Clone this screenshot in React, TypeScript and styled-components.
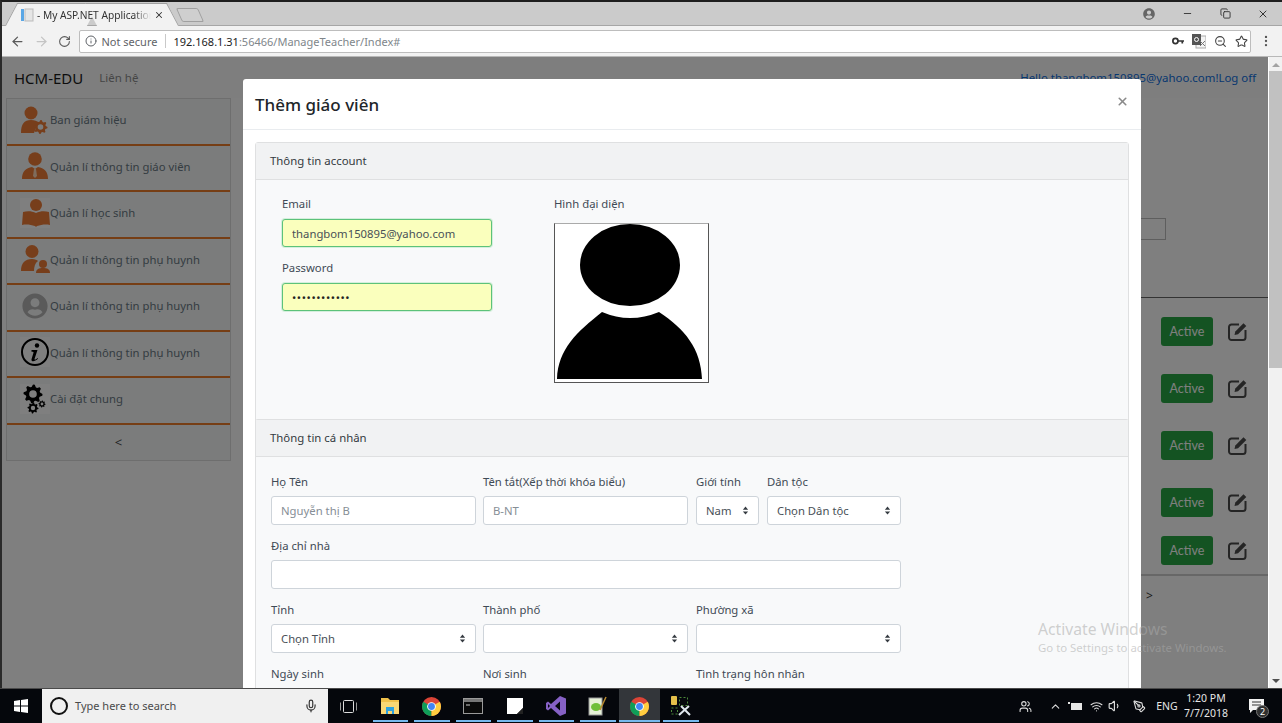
// App.tsx
import React from "react";
import styled, { createGlobalStyle } from "styled-components";
import {
  ArrowLeft,
  ArrowRight,
  RotateCw,
  Info,
  ZoomOut,
  Star,
  MoreVertical,
  Minus,
  Copy,
  X,
  Mic,
  ChevronUp,
  Volume1,
  Wifi,
  Users,
  PenTool,
} from "lucide-react";
import { FaUserCircle } from "react-icons/fa";

const UI_FONT = `"Noto Sans", "Open Sans", "Liberation Sans", sans-serif`;

const GlobalStyle = createGlobalStyle`
  html, body {
    margin: 0;
    padding: 0;
    height: 100%;
    overflow: hidden;
    background: #222;
  }
  * {
    box-sizing: border-box;
  }
  body {
    font-family: ${UI_FONT};
    font-size: 12px;
    color: #212529;
  }
`;

const Screen = styled.div`
  width: 1282px;
  height: 723px;
  display: flex;
  flex-direction: column;
  overflow: hidden;
  position: relative;
`;

const BrowserFrame = styled.div`
  flex: 1;
  min-height: 0;
  display: flex;
  flex-direction: column;
  border-left: 2px solid #2a2a2a;
  border-top: 2px solid #1e1e1e;
`;

/* ---------- tab strip ---------- */

const TabStrip = styled.div`
  height: 24px;
  background: #cbcbcb;
  border-bottom: 1px solid #a6a6a6;
  display: flex;
  align-items: flex-end;
  padding-left: 9px;
  flex-shrink: 0;
`;

const Tab = styled.div`
  position: relative;
  width: 162px;
  height: 23px;
  margin-bottom: -1px;
  display: flex;
  align-items: center;
  padding: 0 9px 0 9px;
  gap: 3px;
  z-index: 1;
  &::before,
  &::after {
    content: "";
    position: absolute;
    top: 0;
    bottom: 0;
    width: 50%;
    background: #f2f2f2;
    border-top: 1px solid #a0a0a0;
    z-index: -1;
  }
  &::before {
    left: 0;
    transform: skewX(-28deg);
    border-left: 1px solid #a0a0a0;
  }
  &::after {
    right: 0;
    transform: skewX(28deg);
    border-right: 1px solid #a0a0a0;
  }
`;

const TabTitle = styled.span`
  flex: 1;
  white-space: nowrap;
  overflow: hidden;
  font-size: 10.2px;
  color: #333;
  mask-image: linear-gradient(to right, #000 85%, transparent);
`;

const NewTab = styled.div`
  width: 22px;
  height: 14px;
  margin: 0 0 3px 6px;
  background: #cfcfcf;
  border: 1px solid #a0a0a0;
  border-radius: 2px;
  transform: skewX(24deg);
`;

const WindowControls = styled.div`
  margin-left: auto;
  align-self: center;
  display: flex;
  align-items: center;
  color: #333;
`;

const ControlSlot = styled.div<{ $w: number }>`
  width: ${(p) => p.$w}px;
  display: flex;
  justify-content: center;
`;

/* ---------- toolbar ---------- */

const Toolbar = styled.div`
  height: 31px;
  background: #f2f2f2;
  border-bottom: 1px solid #b8b8b8;
  display: flex;
  align-items: center;
  flex-shrink: 0;
  padding-left: 4px;
`;

const NavButton = styled.div<{ $off?: boolean }>`
  width: 23.5px;
  display: flex;
  justify-content: center;
  color: ${(p) => (p.$off ? "#c4c4c4" : "#5a5a5a")};
`;

const Omnibox = styled.div`
  margin-left: 2px;
  width: 1172px;
  height: 23px;
  background: #fff;
  border: 1px solid #bdbdbd;
  border-radius: 2px;
  display: flex;
  align-items: center;
  padding-left: 5px;
  font-size: 11px;
`;

const SecurityChip = styled.div`
  display: flex;
  align-items: center;
  gap: 5px;
  color: #5f6368;
  padding-right: 8px;
  border-right: 1px solid #c9c9c9;
  height: 14px;
  margin-right: 7px;
`;

const UrlHost = styled.span`
  color: #222;
`;

const UrlPath = styled.span`
  color: #80868b;
`;

const OmniActions = styled.div`
  margin-left: auto;
  display: flex;
  align-items: center;
  gap: 8px;
  padding-right: 2px;
  color: #444;
`;

const MenuSlot = styled.div`
  width: 30px;
  display: flex;
  justify-content: center;
  color: #555;
`;

/* ---------- page behind the dialog ---------- */

const Viewport = styled.div`
  flex: 1;
  min-height: 0;
  display: flex;
`;

const PageArea = styled.div`
  flex: 1;
  position: relative;
  overflow: hidden;
  background: #fff;
`;

const Navbar = styled.div`
  height: 41px;
  background: #fcfdfd;
  display: flex;
  align-items: center;
  padding: 0 12px;
`;

const Brand = styled.span`
  font-size: 15px;
  color: #1a1a1a;
  margin-right: 16px;
`;

const NavLink = styled.span`
  font-size: 11.5px;
  color: #8c8c8c;
`;

const UserLinks = styled.span`
  margin-left: auto;
  font-size: 11.4px;
  color: #0f6fe0;
`;

const PageBody = styled.div`
  display: flex;
  align-items: flex-start;
`;

const Sidebar = styled.div`
  width: 225px;
  margin-left: 4px;
  background: #f6f8f8;
  border: 1px solid #dcdcdc;
`;

const SideRow = styled.div`
  height: 46.5px;
  display: flex;
  align-items: center;
  padding: 0 0 3px 13px;
  border-bottom: 2px solid #ec7c2a;
  font-size: 11.3px;
  color: #6b7884;
`;

const SideIcon = styled.div<{ $boxed?: boolean }>`
  width: 30px;
  height: 30px;
  flex-shrink: 0;
  display: flex;
  align-items: center;
  justify-content: center;
  background: ${(p) => (p.$boxed ? "#fff" : "transparent")};
`;

const CollapseRow = styled.div`
  height: 35px;
  display: flex;
  align-items: center;
  justify-content: center;
  font-size: 13px;
  color: #4c4c4c;
`;

const MainColumn = styled.div`
  flex: 1;
  padding-top: 120px;
`;

const SearchLine = styled.div`
  display: flex;
  justify-content: flex-end;
  padding-right: 102px;
`;

const SearchBox = styled.div`
  width: 100px;
  height: 22px;
  border: 1px solid #bdbdbd;
`;

const TableTop = styled.div`
  margin: 57px 0 0 60px;
  border-top: 1px solid #666;
  padding-top: 19px;
`;

const TableRow = styled.div<{ $h: number }>`
  height: ${(p) => p.$h}px;
  display: flex;
  justify-content: flex-end;
  gap: 15px;
  padding-right: 21px;
`;

const ActiveButton = styled.div`
  width: 52px;
  height: 29px;
  background: #28a745;
  border-radius: 3px;
  color: #fff;
  font-family: Lato, ${UI_FONT};
  font-size: 12.5px;
  display: flex;
  align-items: center;
  justify-content: center;
`;

const EditSlot = styled.div`
  width: 19px;
  height: 29px;
  display: flex;
  align-items: center;
  color: #4a4a4a;
`;

const Pager = styled.div`
  margin-left: 60px;
  border-top: 2px solid #cfcfcf;
  padding: 11px 0 0 855px;
  font-size: 12px;
  color: #333;
`;

const Backdrop = styled.div`
  position: absolute;
  inset: 0;
  background: rgba(0, 0, 0, 0.5);
`;

/* ---------- dialog ---------- */

const Dialog = styled.div`
  position: absolute;
  top: 22px;
  left: 241px;
  width: 898px;
  height: 700px;
  background: #fff;
  border-radius: 3px 3px 0 0;
`;

const DialogHeader = styled.div`
  height: 51px;
  display: flex;
  align-items: center;
  justify-content: space-between;
  padding: 0 12px;
  border-bottom: 1px solid #e9ecef;
`;

const DialogTitle = styled.h5`
  margin: 0;
  font-size: 17px;
  font-weight: 500;
  color: #212529;
`;

const CloseSlot = styled.div`
  display: flex;
  margin-bottom: 6px;
  color: #8a8a8a;
`;

const DialogBody = styled.div`
  padding: 12px;
`;

const Card = styled.div`
  border: 1px solid #dfe0e1;
  border-radius: 3px;
  background: #f8f9fa;
`;

const CardHeader = styled.div`
  height: 37px;
  display: flex;
  align-items: center;
  padding: 0 0 2px 14px;
  background: #f1f2f3;
  border-bottom: 1px solid #dfe0e1;
  font-size: 11.4px;
  color: #343a40;
`;

const AccountBody = styled.div`
  height: 239px;
  padding: 13px 0 0 26px;
  display: flex;
  gap: 62px;
`;

const Label = styled.label`
  height: 20px;
  margin-bottom: 5px;
  display: flex;
  align-items: center;
  font-size: 11.3px;
  color: #3f4a55;
  white-space: nowrap;
`;

const Field = styled.div<{ $span?: number }>`
  grid-column: span ${(p) => p.$span ?? 1};
  max-width: ${(p) => (p.$span ? "none" : "205px")};
  height: 64px;
  display: flex;
  flex-direction: column;
  min-width: 0;
`;

const AccountFields = styled.div`
  width: 210px;
  display: flex;
  flex-direction: column;
  ${Label} {
    margin-bottom: 6px;
  }
  ${Field} {
    max-width: none;
  }
`;

const InnerCard = styled(Card)`
  margin: 0 -1px;
  border-bottom: none;
`;

const PersonBody = styled.div`
  height: 260px;
  padding: 14px 0 0 15px;
`;

const FormGrid = styled.div`
  width: 630px;
  display: grid;
  grid-template-columns: 212px 213px 205px;
`;

const PairCell = styled.div`
  display: grid;
  grid-template-columns: 63px 134px;
  column-gap: 8px;
`;

const TextInput = styled.input<{ $filled?: boolean }>`
  width: 100%;
  height: ${(p) => (p.$filled ? 28 : 29)}px;
  padding: 0 9px;
  font: inherit;
  font-size: 11.3px;
  color: #495057;
  outline: none;
  border-radius: 3px;
  background: ${(p) => (p.$filled ? "#faffbd" : "#fff")};
  border: 1px solid ${(p) => (p.$filled ? "#5cc27a" : "#ced4da")};
  box-shadow: ${(p) => (p.$filled ? "0 0 0 1px #d5efdc" : "none")};
  &::placeholder {
    color: #868e96;
  }
  &[type="password"] {
    letter-spacing: 0.6px;
    color: #222;
  }
`;

const SelectBox = styled.div`
  height: 29px;
  padding: 0 9px;
  display: flex;
  align-items: center;
  justify-content: space-between;
  background: #fff;
  border: 1px solid #ced4da;
  border-radius: 3px;
  font-size: 11.3px;
  color: #495057;
`;

const Avatar = styled.div`
  width: 155px;
  height: 160px;
  margin-top: 5px;
  background: #fff;
  border: 1px solid #555;
  border-top-color: #aaa;
  svg {
    display: block;
  }
`;

const AvatarColumn = styled.div`
  display: flex;
  flex-direction: column;
`;

/* ---------- right scrollbar ---------- */

const Scrollbar = styled.div`
  width: 14px;
  background: #f1f1f1;
  display: flex;
  flex-direction: column;
  align-items: center;
  border-left: 1px solid #fff;
`;

const ScrollArrow = styled.div<{ $down?: boolean }>`
  width: 0;
  height: 0;
  border-left: 4px solid transparent;
  border-right: 4px solid transparent;
  ${(p) =>
    p.$down
      ? "border-top: 4px solid #505050; margin-top: auto; margin-bottom: 5px;"
      : "border-bottom: 4px solid #a3a3a3; margin-top: 6px;"}
`;

const ScrollThumb = styled.div`
  width: 100%;
  height: 297px;
  margin-top: 4px;
  background: #c1c1c1;
`;

/* ---------- activation watermark ---------- */

const Watermark = styled.div`
  position: absolute;
  left: 1038px;
  top: 619px;
  color: rgba(169, 169, 169, 0.54);
  pointer-events: none;
  z-index: 5;
`;

const WatermarkTitle = styled.div`
  font-size: 15.7px;
  line-height: 20px;
`;

const WatermarkHint = styled.div`
  font-size: 11.4px;
  line-height: 18px;
`;

/* ---------- taskbar ---------- */

const Taskbar = styled.div`
  height: 35px;
  flex-shrink: 0;
  background: #05070c;
  border-top: 1px solid #4a4a4a;
  display: flex;
  align-items: stretch;
  color: #e6e6e6;
`;

const StartButton = styled.div`
  width: 42px;
  display: flex;
  align-items: center;
  justify-content: center;
`;

const SearchField = styled.div`
  width: 286px;
  background: #f0f0f0;
  display: flex;
  align-items: center;
  padding: 0 10px 1px 7px;
  font-size: 11px;
  color: #4a4a4a;
`;

const CortanaRing = styled.div`
  width: 18px;
  height: 18px;
  border-radius: 50%;
  border: 2px solid #111;
  margin: 0 7px 0 1px;
`;

const MicSlot = styled.div`
  margin-left: auto;
  display: flex;
  color: #333;
`;

const TaskItem = styled.div<{ $on?: boolean; $active?: boolean }>`
  width: 41.5px;
  position: relative;
  display: flex;
  align-items: center;
  justify-content: center;
  background: ${(p) => (p.$active ? "#33363a" : "transparent")};
  &::after {
    content: "";
    display: ${(p) => (p.$on ? "block" : "none")};
    position: absolute;
    bottom: 1px;
    left: ${(p) => (p.$active ? 0 : 3)}px;
    right: ${(p) => (p.$active ? 0 : 3)}px;
    height: 2px;
    background: #76b9ed;
  }
`;

const Tray = styled.div`
  margin-left: auto;
  display: flex;
  align-items: center;
  padding-right: 11px;
`;

const TraySlot = styled.div<{ $w: number }>`
  width: ${(p) => p.$w}px;
  display: flex;
  justify-content: center;
  color: #dcdcdc;
`;

const TrayLang = styled.div`
  width: 28px;
  text-align: center;
  font-size: 10.5px;
`;

const Clock = styled.div`
  width: 50px;
  text-align: center;
  font-size: 10.5px;
  line-height: 15px;
  white-space: nowrap;
`;

const NotifySlot = styled.div`
  position: relative;
  width: 30px;
  margin-left: 10px;
  display: flex;
  justify-content: center;
`;

const NotifyBadge = styled.span`
  position: absolute;
  right: 2px;
  top: 6px;
  width: 13px;
  height: 13px;
  border-radius: 50%;
  background: #2f2f2f;
  border: 1px solid #777;
  color: #fff;
  font-size: 9px;
  line-height: 11px;
  text-align: center;
`;

/* ---------- drawings ---------- */

const gearPath = (cx: number, cy: number, r: number, teeth: number) => {
  const pts: string[] = [];
  const steps = teeth * 4;
  for (let i = 0; i < steps; i++) {
    const a = (i / steps) * Math.PI * 2;
    const rad = i % 4 < 2 ? r : r * 0.76;
    pts.push(`${(cx + Math.cos(a) * rad).toFixed(2)} ${(cy + Math.sin(a) * rad).toFixed(2)}`);
  }
  const h = r * 0.4;
  return `M${pts.join("L")}Z M${cx - h} ${cy}a${h} ${h} 0 1 0 ${h * 2} 0a${h} ${h} 0 1 0 ${-h * 2} 0Z`;
};

const BROWN = "#ee7c36";

const AdminIcon = () => (
  <svg width="30" height="30" viewBox="0 0 30 30">
    <circle cx="11" cy="8" r="6.5" fill={BROWN} />
    <path d="M1 28c0-9 3-13 10-13 4 0 6 1 7 3l-4 10z" fill={BROWN} />
    <path d={gearPath(20.5, 22, 7, 8)} fill={BROWN} fillRule="evenodd" />
  </svg>
);

const TeacherIcon = () => (
  <svg width="30" height="30" viewBox="0 0 30 30">
    <circle cx="15" cy="8" r="6.8" fill={BROWN} />
    <path d="M2 28c0-8 4-11 10-12l3 2 3-2c6 1 10 4 10 12z" fill={BROWN} />
    <path d="M14 18h2l1 7-2 2-2-2z" fill="#ffd9b8" />
  </svg>
);

const StudentIcon = () => (
  <svg width="30" height="30" viewBox="0 0 30 30">
    <circle cx="16" cy="7" r="6" fill={BROWN} />
    <path d="M3 14c4-1 9-1 13 1 4-2 9-2 13-1l1 13c-5-1-9 0-13 1l-1 1-1-1c-4-1-8-2-13-1z" fill={BROWN} />
  </svg>
);

const ParentIcon = () => (
  <svg width="30" height="30" viewBox="0 0 30 30">
    <circle cx="12" cy="7.5" r="6.5" fill={BROWN} />
    <path d="M1 27c0-8 4-12 11-12 3 0 5 1 6 2-3 2-4 6-4 10z" fill={BROWN} />
    <circle cx="23" cy="20" r="4" fill={BROWN} />
    <path d="M16 29c0-4 3-5 7-5s7 1 7 5z" fill={BROWN} />
  </svg>
);

const InfoRingIcon = () => (
  <svg width="30" height="30" viewBox="0 0 30 30">
    <circle cx="15" cy="15" r="13" fill="none" stroke="#000" strokeWidth="2" />
    <circle cx="17" cy="8.5" r="2.2" fill="#000" />
    <path d="M11.5 13h6l-3 9c0 1 1 1 3-1l.5.8c-3 3-7 3.5-6.5.5l2-6.5c.2-1-.6-1.2-2-1z" fill="#000" />
  </svg>
);

const GearsIcon = () => (
  <svg width="30" height="30" viewBox="0 0 30 30">
    <path d={gearPath(13, 10, 9.5, 8)} fill="#000" fillRule="evenodd" />
    <path d={gearPath(13, 24, 5.5, 8)} fill="#000" fillRule="evenodd" />
    <path d={gearPath(22, 20, 3.5, 8)} fill="#000" fillRule="evenodd" />
  </svg>
);

const EditIcon = () => (
  <svg width="19" height="19" viewBox="0 0 19 19">
    <path
      d="M11 2.5H3.5A2.5 2.5 0 0 0 1 5v10.5A2.5 2.5 0 0 0 3.5 18H15a2.5 2.5 0 0 0 2.5-2.5V8"
      fill="none"
      stroke="currentColor"
      strokeWidth="2"
    />
    <path d="M6.5 13l.8-3.6L15.5 1.2l2.8 2.8-8.2 8.2z" fill="currentColor" />
  </svg>
);

const SelectArrows = () => (
  <svg width="7" height="9" viewBox="0 0 8 10">
    <path d="M4 0.5 7 4H1zM4 9.5 1 6h6z" fill="#343a40" />
  </svg>
);

const AvatarPicture = () => (
  <svg width="153" height="158" viewBox="0 0 153 158">
    <ellipse cx="75" cy="41" rx="50" ry="41" fill="#000" />
    <path d="M2 155C3 125 22 108 47 88Q75 100 104 88C130 105 146 125 147 155Z" fill="#000" />
  </svg>
);

const PageGlyph = () => (
  <svg width="14" height="14" viewBox="0 0 14 14">
    <rect x="1" y="1" width="3" height="12" fill="#5aa7e6" />
    <rect x="5" y="1" width="8" height="12" fill="#e6e6e6" stroke="#bbb" />
  </svg>
);

const KeyGlyph = () => (
  <svg width="12" height="12" viewBox="0 0 14 14">
    <circle cx="4" cy="7" r="3" fill="none" stroke="#333" strokeWidth="2" />
    <path d="M7 6h7v2h-1v2h-2V8H7z" fill="#333" />
  </svg>
);

const TranslateGlyph = () => (
  <svg width="14" height="15" viewBox="0 0 14 15">
    <rect x="4" y="2" width="10" height="12" fill="#f4f4f4" stroke="#aaa" />
    <rect x="0" y="0" width="9" height="11" fill="#555" />
    <circle cx="4.5" cy="5.5" r="2" fill="none" stroke="#fff" />
    <path d="M8 7l5 5M13 7l-5 5" stroke="#777" />
  </svg>
);

const WindowsLogo = () => (
  <svg width="14" height="14" viewBox="0 0 14 14">
    <path d="M0 2l6-1v5.6H0zM7 .9 14 0v6.6H7zM0 7.4h6V13l-6-1zM7 7.4h7V14l-7-1z" fill="#fff" />
  </svg>
);

const TaskViewIcon = () => (
  <svg width="17" height="13" viewBox="0 0 17 13">
    <rect x="3.5" y=".5" width="10" height="12" rx="1" fill="none" stroke="#ddd" />
    <path d="M.5 2.5v8M16.5 2.5v8" stroke="#999" />
  </svg>
);

const ChromeIcon = () => (
  <svg width="19" height="19" viewBox="0 0 20 20">
    <circle cx="10" cy="10" r="10" fill="#db4437" />
    <path d="M10 10 1.34 5A10 10 0 0 0 10 20z" fill="#0f9d58" />
    <path d="M10 10V20A10 10 0 0 0 18.66 5z" fill="#ffcd40" />
    <circle cx="10" cy="10" r="4.6" fill="#fff" />
    <circle cx="10" cy="10" r="3.6" fill="#4285f4" />
  </svg>
);

const FolderIcon = () => (
  <svg width="20" height="18" viewBox="0 0 20 18">
    <path d="M1 1h7l2 2h9v3H1z" fill="#f0c14b" />
    <path d="M1 5h18v12H1z" fill="#f8d775" />
    <path d="M6 10h8v7h-2v-3H8v3H6z" fill="#2ba1e0" />
  </svg>
);

const ConsoleIcon = () => (
  <svg width="20" height="16" viewBox="0 0 20 16">
    <rect x=".5" y=".5" width="19" height="15" fill="#0a0a0a" stroke="#9a9a9a" />
    <rect x="1" y="1" width="18" height="3" fill="#777" />
    <path d="M3 7h4" stroke="#ccc" />
  </svg>
);

const StickyIcon = () => (
  <svg width="16" height="16" viewBox="0 0 16 16">
    <path d="M0 0h16v10l-6 6H0z" fill="#fff" />
    <path d="M16 10v6h-6z" fill="#222" />
  </svg>
);

const StudioIcon = () => (
  <svg width="20" height="20" viewBox="0 0 20 20">
    <path d="M14 0l6 2.5v15L14 20 5 12l-3 2.5L0 13V7l2-1.5L5 8zM14 5.5 9 10l5 4.5zM2 8v4l2-2z" fill="#8661c5" />
  </svg>
);

const NotepadIcon = () => (
  <svg width="20" height="20" viewBox="0 0 20 20">
    <rect x="1" y="2" width="13" height="17" fill="#e6f1d8" stroke="#999" />
    <ellipse cx="8" cy="11" rx="5" ry="4" fill="#6fbf3a" />
    <path d="M12 14 18 1" stroke="#b98a2e" strokeWidth="1.5" />
  </svg>
);

const ToolboxIcon = () => (
  <svg width="22" height="22" viewBox="0 0 22 22">
    <rect x="1" y="1" width="6" height="9" rx="1" fill="#e5c04a" />
    <rect x="9.5" y="2.5" width="8" height="8" fill="none" stroke="#4d8a3a" strokeDasharray="2 2" />
    <rect x="1.5" y="13" width="6" height="6" fill="none" stroke="#4d8a3a" strokeDasharray="2 2" />
    <path d="M9 20l10-9M11 11l9 9" stroke="#dfe6ee" strokeWidth="2" />
  </svg>
);

const BatteryGlyph = () => (
  <svg width="14" height="10" viewBox="0 0 14 10">
    <path d="M0 1h2v2H0zM3 2h11v7H3z" fill="#e6e6e6" />
  </svg>
);

const NoteGlyph = () => (
  <svg width="15" height="14" viewBox="0 0 15 14">
    <path d="M0 0h15v11H4l-3 3v-3H0z" fill="#f2f2f2" />
    <path d="M3 3h9M3 6h9" stroke="#333" />
  </svg>
);

/* ---------- data ---------- */

const sideItems = [
  { label: "Ban giám hiệu", icon: <AdminIcon /> },
  { label: "Quản lí thông tin giáo viên", icon: <TeacherIcon /> },
  { label: "Quản lí học sinh", icon: <StudentIcon />, boxed: true },
  { label: "Quản lí thông tin phụ huynh", icon: <ParentIcon /> },
  { label: "Quản lí thông tin phụ huynh", icon: <FaUserCircle size={26} color="#b4b4b4" /> },
  { label: "Quản lí thông tin phụ huynh", icon: <InfoRingIcon />, boxed: true },
  { label: "Cài đặt chung", icon: <GearsIcon />, boxed: true },
];

const rowHeights = [57, 57, 57, 48, 38];

const taskIcons = [
  { icon: <TaskViewIcon />, on: false },
  { icon: <FolderIcon />, on: true },
  { icon: <ChromeIcon />, on: true },
  { icon: <ConsoleIcon />, on: true },
  { icon: <StickyIcon />, on: true },
  { icon: <StudioIcon />, on: true },
  { icon: <NotepadIcon />, on: true },
  { icon: <ChromeIcon />, on: true, active: true },
  { icon: <ToolboxIcon />, on: true },
];

const App: React.FC = () => {
  return (
    <Screen>
      <GlobalStyle />
      <BrowserFrame>
        <TabStrip>
          <Tab>
            <PageGlyph />
            <TabTitle>- My ASP.NET Application</TabTitle>
            <X size={10} strokeWidth={2.5} color="#333" />
          </Tab>
          <NewTab />
          <WindowControls>
            <ControlSlot $w={38}>
              <FaUserCircle size={12} color="#666" />
            </ControlSlot>
            <ControlSlot $w={38}>
              <Minus size={11} />
            </ControlSlot>
            <ControlSlot $w={38}>
              <Copy size={11} />
            </ControlSlot>
            <ControlSlot $w={38}>
              <X size={12} />
            </ControlSlot>
          </WindowControls>
        </TabStrip>

        <Toolbar>
          <NavButton>
            <ArrowLeft size={15} />
          </NavButton>
          <NavButton $off>
            <ArrowRight size={15} />
          </NavButton>
          <NavButton>
            <RotateCw size={13} />
          </NavButton>
          <Omnibox>
            <SecurityChip>
              <Info size={12} />
              Not secure
            </SecurityChip>
            <UrlHost>192.168.1.31</UrlHost>
            <UrlPath>:56466/ManageTeacher/Index#</UrlPath>
            <OmniActions>
              <KeyGlyph />
              <TranslateGlyph />
              <ZoomOut size={13} />
              <Star size={13} />
            </OmniActions>
          </Omnibox>
          <MenuSlot>
            <MoreVertical size={14} />
          </MenuSlot>
        </Toolbar>

        <Viewport>
          <PageArea>
            <Navbar>
              <Brand>HCM-EDU</Brand>
              <NavLink>Liên hệ</NavLink>
              <UserLinks>Hello thangbom150895@yahoo.com!Log off</UserLinks>
            </Navbar>
            <PageBody>
              <Sidebar>
                {sideItems.map((item, i) => (
                  <SideRow key={i}>
                    <SideIcon $boxed={item.boxed}>{item.icon}</SideIcon>
                    {item.label}
                  </SideRow>
                ))}
                <CollapseRow>&lt;</CollapseRow>
              </Sidebar>
              <MainColumn>
                <SearchLine>
                  <SearchBox />
                </SearchLine>
                <TableTop>
                  {rowHeights.map((h, i) => (
                    <TableRow key={i} $h={h}>
                      <ActiveButton>Active</ActiveButton>
                      <EditSlot>
                        <EditIcon />
                      </EditSlot>
                    </TableRow>
                  ))}
                </TableTop>
                <Pager>&gt;</Pager>
              </MainColumn>
            </PageBody>
            <Backdrop />

            <Dialog>
              <DialogHeader>
                <DialogTitle>Thêm giáo viên</DialogTitle>
                <CloseSlot>
                  <X size={13} strokeWidth={3} />
                </CloseSlot>
              </DialogHeader>
              <DialogBody>
                <Card>
                  <CardHeader>Thông tin account</CardHeader>
                  <AccountBody>
                    <AccountFields>
                      <Field>
                        <Label>Email</Label>
                        <TextInput $filled readOnly defaultValue="thangbom150895@yahoo.com" />
                      </Field>
                      <Field>
                        <Label>Password</Label>
                        <TextInput $filled readOnly type="password" defaultValue="123456789012" />
                      </Field>
                    </AccountFields>
                    <AvatarColumn>
                      <Label>Hình đại diện</Label>
                      <Avatar>
                        <AvatarPicture />
                      </Avatar>
                    </AvatarColumn>
                  </AccountBody>
                  <InnerCard>
                    <CardHeader>Thông tin cá nhân</CardHeader>
                    <PersonBody>
                      <FormGrid>
                        <Field>
                          <Label>Họ Tên</Label>
                          <TextInput readOnly placeholder="Nguyễn thị B" />
                        </Field>
                        <Field>
                          <Label>Tên tắt(Xếp thời khóa biểu)</Label>
                          <TextInput readOnly placeholder="B-NT" />
                        </Field>
                        <PairCell>
                          <Field>
                            <Label>Giới tính</Label>
                            <SelectBox>
                              Nam
                              <SelectArrows />
                            </SelectBox>
                          </Field>
                          <Field>
                            <Label>Dân tộc</Label>
                            <SelectBox>
                              Chọn Dân tộc
                              <SelectArrows />
                            </SelectBox>
                          </Field>
                        </PairCell>
                        <Field $span={3}>
                          <Label>Địa chỉ nhà</Label>
                          <TextInput readOnly />
                        </Field>
                        <Field>
                          <Label>Tỉnh</Label>
                          <SelectBox>
                            Chọn Tỉnh
                            <SelectArrows />
                          </SelectBox>
                        </Field>
                        <Field>
                          <Label>Thành phố</Label>
                          <SelectBox>
                            <span />
                            <SelectArrows />
                          </SelectBox>
                        </Field>
                        <Field>
                          <Label>Phường xã</Label>
                          <SelectBox>
                            <span />
                            <SelectArrows />
                          </SelectBox>
                        </Field>
                        <Field>
                          <Label>Ngày sinh</Label>
                        </Field>
                        <Field>
                          <Label>Nơi sinh</Label>
                        </Field>
                        <Field>
                          <Label>Tình trạng hôn nhân</Label>
                        </Field>
                      </FormGrid>
                    </PersonBody>
                  </InnerCard>
                </Card>
              </DialogBody>
            </Dialog>
          </PageArea>
          <Scrollbar>
            <ScrollArrow />
            <ScrollThumb />
            <ScrollArrow $down />
          </Scrollbar>
        </Viewport>
      </BrowserFrame>

      <Taskbar>
        <StartButton>
          <WindowsLogo />
        </StartButton>
        <SearchField>
          <CortanaRing />
          Type here to search
          <MicSlot>
            <Mic size={14} />
          </MicSlot>
        </SearchField>
        {taskIcons.map((t, i) => (
          <TaskItem key={i} $on={t.on} $active={t.active}>
            {t.icon}
          </TaskItem>
        ))}
        <Tray>
          <TraySlot $w={44}>
            <Users size={13} />
          </TraySlot>
          <TraySlot $w={16}>
            <ChevronUp size={13} />
          </TraySlot>
          <TraySlot $w={24}>
            <BatteryGlyph />
          </TraySlot>
          <TraySlot $w={18}>
            <Wifi size={13} />
          </TraySlot>
          <TraySlot $w={20}>
            <Volume1 size={14} />
          </TraySlot>
          <TraySlot $w={28}>
            <PenTool size={13} />
          </TraySlot>
          <TrayLang>ENG</TrayLang>
          <Clock>
            1:20 PM
            <br />
            7/7/2018
          </Clock>
          <NotifySlot>
            <NoteGlyph />
            <NotifyBadge>2</NotifyBadge>
          </NotifySlot>
        </Tray>
      </Taskbar>

      <Watermark>
        <WatermarkTitle>Activate Windows</WatermarkTitle>
        <WatermarkHint>Go to Settings to activate Windows.</WatermarkHint>
      </Watermark>
    </Screen>
  );
};

export default App;
